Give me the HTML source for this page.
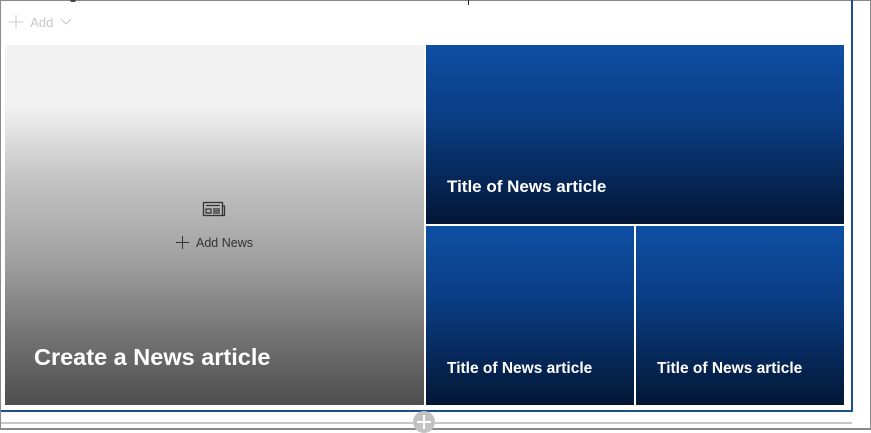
<!DOCTYPE html><html><head><style>
body{margin:0;width:871px;height:429px;position:relative;overflow:hidden;background:#fff;font-family:"Liberation Sans",sans-serif}
.a{position:absolute}
.t{position:absolute;background:linear-gradient(#0e4fa4,#0a3b80 45%,#031735)}
.t span{position:absolute;left:21px;color:#fff;font-weight:bold;font-size:16px}
</style></head><body>
<div class="a" style="left:0;top:0;width:869px;height:427px;border:1px solid #8a8a8a;border-bottom:2px solid #8a8a8a;box-sizing:content-box"></div>
<div class="a" style="left:468px;top:0;width:1px;height:5px;background:#222"></div>
<div class="a" style="left:70px;top:0;width:6px;height:2px;background:#444;border-radius:0 0 3px 3px"></div>
<div class="a" style="left:851px;top:0;width:2px;height:412px;background:#1d4f96"></div>
<div class="a" style="left:1px;top:410px;width:852px;height:2px;background:#1d4f96"></div>
<div class="a" style="left:1px;top:422px;width:851px;height:2px;background:#c8c8c8"></div>
<div class="a" style="left:413px;top:411px;width:22px;height:22px;border-radius:50%;background:#c2c2c2"></div>
<div class="a" style="left:423px;top:415px;width:2px;height:14px;background:#fff"></div>
<div class="a" style="left:417px;top:421px;width:14px;height:2px;background:#fff"></div>
<div class="a" style="left:9px;top:15px;color:#c8c8c8;font-size:13px">
<svg width="14" height="14" style="vertical-align:-2px"><path d="M7 0V14M0 7H14" stroke="#c8c8c8" stroke-width="1"/></svg> &nbsp;Add <svg width="12" height="8" style="vertical-align:1px;margin-left:3px"><path d="M1 1L6 6L11 1" stroke="#c8c8c8" fill="none"/></svg></div>
<div class="a" style="left:5px;top:45px;width:419px;height:360px;background:linear-gradient(#f3f3f3 0%,#f2f2f2 17%,#c8c8c8 35%,#a0a0a0 60%,#757575 80%,#4e4e4e 100%)">
<svg class="a" style="left:197px;top:155px" width="24" height="18"><rect x="1.5" y="2.5" width="19" height="13" fill="none" stroke="#333" stroke-width="1.3"/><path d="M20.5 6H22.5V15.5H20.5M4 5.5H18M4 9H9V13H4Z M11 9H18M11 11H18M11 13H18" stroke="#333" fill="none" stroke-width="1.2"/></svg>
<svg class="a" style="left:171px;top:191px" width="13" height="13"><path d="M6.5 0V13M0 6.5H13" stroke="#333" stroke-width="1"/></svg>
<div class="a" style="left:191px;top:191px;font-size:12.5px;color:#333">Add News</div>
<div class="a" style="left:29px;top:299px;color:#fff;font-weight:bold;font-size:23.5px">Create a News article</div>
</div>
<div class="t" style="left:426px;top:45px;width:418px;height:179px"><span style="top:132px;font-size:17px">Title of News article</span></div>
<div class="t" style="left:426px;top:226px;width:208px;height:179px"><span style="top:134px;font-size:15.5px">Title of News article</span></div>
<div class="t" style="left:636px;top:226px;width:208px;height:179px"><span style="top:134px;font-size:15.5px">Title of News article</span></div>
</body></html>
